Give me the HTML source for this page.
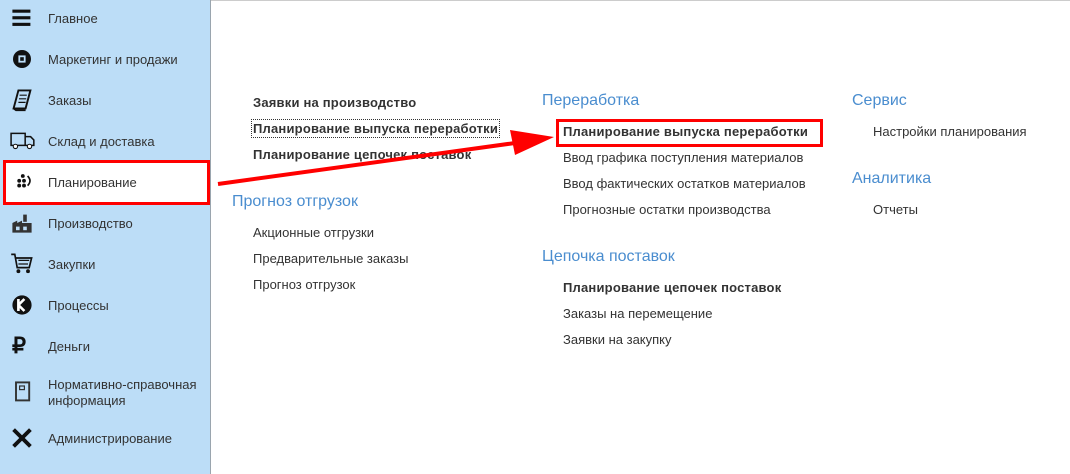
<!DOCTYPE html>
<html><head><meta charset="utf-8"><style>
body{margin:0;width:1070px;height:474px;position:relative;font-family:"Liberation Sans",Arial,sans-serif;background:#fff;overflow:hidden;color:#333}
#sb{position:absolute;left:0;top:0;width:210px;height:474px;background:#bcddf7;border-right:1px solid #9aa5ae}
.it{position:absolute;left:48px;font-size:13px;color:#333}
.ic{position:absolute;left:10px;width:24px;height:24px}
.a{position:absolute;font-size:13px;color:#333;white-space:nowrap}
.b{font-weight:bold;letter-spacing:0.2px}
.h{position:absolute;font-size:16px;color:#4a8dcf;white-space:nowrap}
</style></head><body>
<div style="position:absolute;left:211px;top:0;width:859px;height:1px;background:#ccc"></div>
<div id="sb">
<svg class="ic" style="top:6px" viewBox="0 0 20 20"><rect x="2" y="3" width="15" height="2.6" fill="#111"/><rect x="2" y="8.5" width="15" height="2.6" fill="#111"/><rect x="2" y="14" width="15" height="2.6" fill="#111"/></svg>
<div class="it" style="top:11px">Главное</div>
<svg class="ic" style="top:47px" viewBox="0 0 20 20"><circle cx="10" cy="10" r="7.5" fill="#111"/><rect x="7" y="7" width="6" height="6" fill="#bcddf7"/><rect x="8.5" y="8.5" width="3" height="3" fill="#111"/></svg>
<div class="it" style="top:52px">Маркетинг и продажи</div>
<svg class="ic" style="top:88px" viewBox="0 0 20 20"><path d="M7 2h10l-4 15H3z" fill="none" stroke="#111" stroke-width="1.6"/><path d="M8 6h6M7.5 9h6M7 12h6" stroke="#111"/><path d="M3 17l2 1.5h8" stroke="#111" stroke-width="1.5" fill="none"/></svg>
<div class="it" style="top:93px">Заказы</div>
<svg class="ic" style="top:129px;width:26px" viewBox="0 0 24 20"><path d="M1 3h13v11H1zM14 6h5l3 3v5h-8" fill="none" stroke="#111" stroke-width="1.4"/><circle cx="5" cy="15" r="2" fill="#fff" stroke="#111"/><circle cx="18" cy="15" r="2" fill="#fff" stroke="#111"/></svg>
<div class="it" style="top:134px">Склад и доставка</div>
<svg class="ic" style="top:211px" viewBox="0 0 20 20"><path d="M2 18V10l4-2v2l4-2v2h8v8z" fill="#333"/><rect x="11" y="3" width="3" height="6" fill="#333"/><rect x="5" y="13" width="3" height="3" fill="#bcddf7"/><rect x="11" y="13" width="3" height="3" fill="#bcddf7"/></svg>
<div class="it" style="top:216px">Производство</div>
<svg class="ic" style="top:252px" viewBox="0 0 20 20"><path d="M1 2h3l2 11h10l2-8H5" fill="none" stroke="#111" stroke-width="1.4"/><path d="M7 7h9M7 10h8" stroke="#111"/><circle cx="7" cy="16" r="1.6" fill="#111"/><circle cx="15" cy="16" r="1.6" fill="#111"/></svg>
<div class="it" style="top:257px">Закупки</div>
<svg class="ic" style="top:293px" viewBox="0 0 20 20"><circle cx="10" cy="10" r="8" fill="#111"/><path d="M7 5v10M7 10l5-5M7 10l5 5" stroke="#fff" stroke-width="2.2"/></svg>
<div class="it" style="top:298px">Процессы</div>
<div style="position:absolute;left:12px;top:333px;font-size:22px;font-weight:bold;color:#111">₽</div>
<div class="it" style="top:339px">Деньги</div>
<svg class="ic" style="top:380px" viewBox="0 0 20 20"><rect x="5" y="2" width="11" height="15" fill="none" stroke="#333" stroke-width="1.6"/><rect x="8" y="5" width="4" height="3" fill="none" stroke="#333"/></svg>
<div class="it" style="top:377px;line-height:16px">Нормативно-справочная<br>информация</div>
<svg class="ic" style="top:426px" viewBox="0 0 20 20"><path d="M3 3l14 14M17 3L3 17" stroke="#111" stroke-width="3.2"/></svg>
<div class="it" style="top:431px">Администрирование</div>
</div>
<div style="position:absolute;left:3px;top:160px;width:201px;height:39px;background:#fff;border:3px solid #f00"></div>
<svg style="position:absolute;left:12px;top:170px;width:24px;height:24px" viewBox="0 0 20 20"><circle cx="9" cy="5" r="1.6" fill="#111"/><circle cx="6" cy="9" r="1.6" fill="#111"/><circle cx="10" cy="9" r="1.6" fill="#111"/><circle cx="6" cy="13" r="1.6" fill="#111"/><circle cx="10" cy="13" r="1.6" fill="#111"/><path d="M13 5q4 4 0 8" fill="none" stroke="#111" stroke-width="1.4"/></svg>
<div class="it" style="top:175px">Планирование</div>

<div class="a b" style="left:253px;top:95px">Заявки на производство</div>
<div class="a b" style="left:251px;top:119px;border:1px dotted #333;padding:1px 1px">Планирование выпуска переработки</div>
<div class="a b" style="left:253px;top:147px">Планирование цепочек поставок</div>
<div class="h" style="left:232px;top:193px">Прогноз отгрузок</div>
<div class="a" style="left:253px;top:225px">Акционные отгрузки</div>
<div class="a" style="left:253px;top:251px">Предварительные заказы</div>
<div class="a" style="left:253px;top:277px">Прогноз отгрузок</div>

<div class="h" style="left:542px;top:92px">Переработка</div>
<div style="position:absolute;left:556px;top:119px;width:261px;height:22px;border:3px solid #f00"></div>
<div class="a b" style="left:563px;top:124px">Планирование выпуска переработки</div>
<div class="a" style="left:563px;top:150px">Ввод графика поступления материалов</div>
<div class="a" style="left:563px;top:176px">Ввод фактических остатков материалов</div>
<div class="a" style="left:563px;top:202px">Прогнозные остатки производства</div>
<div class="h" style="left:542px;top:248px">Цепочка поставок</div>
<div class="a b" style="left:563px;top:280px">Планирование цепочек поставок</div>
<div class="a" style="left:563px;top:306px">Заказы на перемещение</div>
<div class="a" style="left:563px;top:332px">Заявки на закупку</div>

<div class="h" style="left:852px;top:92px">Сервис</div>
<div class="a" style="left:873px;top:124px">Настройки планирования</div>
<div class="h" style="left:852px;top:170px">Аналитика</div>
<div class="a" style="left:873px;top:202px">Отчеты</div>

<svg style="position:absolute;left:0;top:0" width="1070" height="474"><line x1="218" y1="184" x2="515" y2="143" stroke="#f00" stroke-width="4"/><polygon points="554,137 510,130 515,155" fill="#f00"/></svg>
</body></html>
